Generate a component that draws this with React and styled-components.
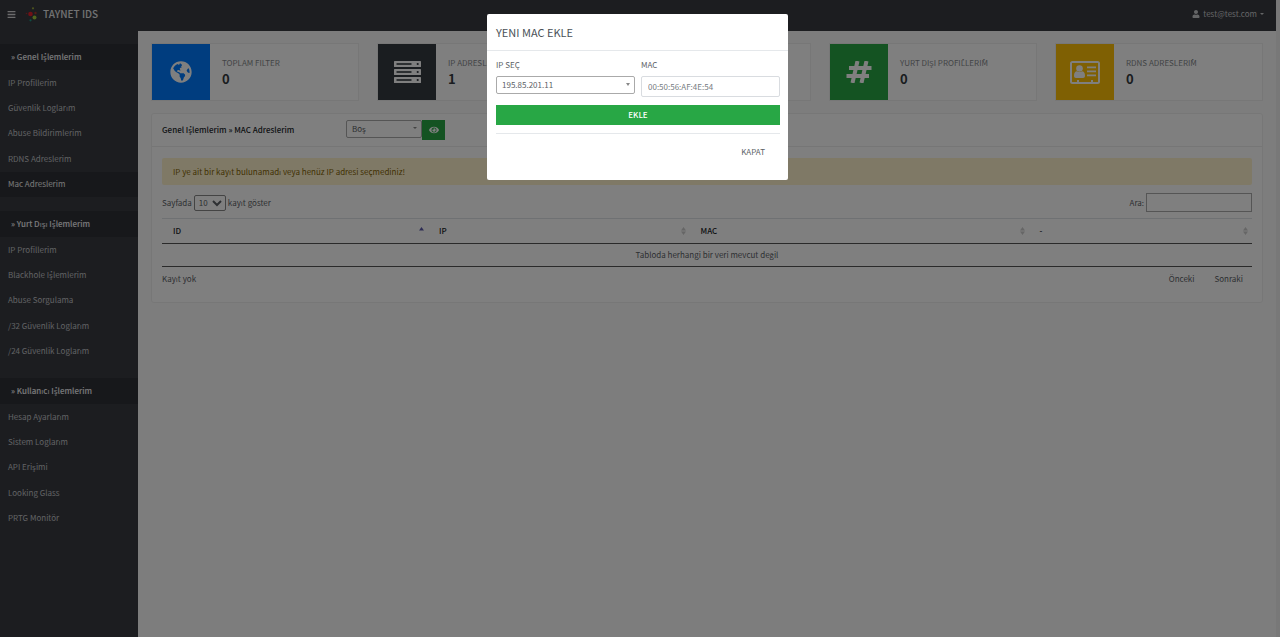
import React, { useState } from "react";
import styled, { createGlobalStyle } from "styled-components";
import { FaBars, FaUser, FaEye, FaGlobeAmericas } from "react-icons/fa";

const GlobalStyle = createGlobalStyle`
  * {
    box-sizing: border-box;
  }

  body {
    margin: 0;
    background-color: #fbfbfb;
    color: #5c6166;
    font-family: "Noto Sans CJK SC", "Open Sans", sans-serif;
    font-size: 8px;
    line-height: 12px;
  }

  button,
  input,
  select {
    font: inherit;
    color: inherit;
  }

  a {
    color: inherit;
    text-decoration: none;
  }
`;

const Page = styled.div`
  min-height: 100vh;
  display: grid;
  grid-template-columns: 138px 1fr;
  grid-template-rows: 31px 1fr;
  border-right: 4px solid #f1f1f1;
`;

const TopBar = styled.header`
  grid-column: 1 / -1;
  display: flex;
  align-items: center;
  justify-content: space-between;
  padding: 0 12px 3px 7px;
  background-color: #383a40;
  color: #c9cacd;
`;

const Brand = styled.div`
  display: flex;
  align-items: center;
  font-size: 10px;
  font-weight: 500;
  color: #e4e4e6;
`;

const MenuButton = styled.button`
  display: flex;
  padding: 0;
  margin-right: 9px;
  border: none;
  background: none;
  color: #d8d8da;
  font-size: 9px;
`;

const Logo = styled.svg`
  width: 14px;
  height: 16px;
  margin-right: 4px;
`;

const UserButton = styled.button`
  display: flex;
  align-items: center;
  gap: 3px;
  padding: 0;
  border: none;
  background: none;
`;

const Caret = styled.span`
  border-left: 2px solid transparent;
  border-right: 2px solid transparent;
  border-top: ${({ size }) => size || 2}px solid currentColor;
`;

const Sidebar = styled.nav`
  padding-top: 13px;
  background-color: #383a40;
`;

const Group = styled.section`
  margin-bottom: 14px;
`;

const GroupTitle = styled.h2`
  margin: 0;
  padding: 0 11px;
  background-color: #2f3136;
  color: #f4f4f6;
  font-size: 8px;
  font-weight: 500;
  line-height: 26px;
`;

const MenuList = styled.ul`
  display: grid;
  grid-auto-rows: 1fr;
  min-height: 127px;
  margin: 0;
  padding: 0;
  list-style: none;
`;

const MenuLink = styled.a`
  display: flex;
  align-items: center;
  height: 100%;
  padding: 0 8px;
  color: ${({ $active }) => ($active ? "#f0f0f1" : "#c2c4c8")};
  background-color: ${({ $active }) => ($active ? "#2f3136" : "transparent")};
`;

const Content = styled.main`
  padding: 12px 13px;
`;

const Cards = styled.div`
  display: grid;
  grid-template-columns: repeat(5, 1fr);
  gap: 18px;
  margin-bottom: 12px;
`;

const Card = styled.div`
  display: flex;
  border: 1px solid #eeeeee;
  background-color: #ffffff;
`;

const CardIcon = styled.div`
  display: flex;
  align-items: center;
  justify-content: center;
  width: 58px;
  background-color: ${({ color }) => color};
  color: #ffffff;
  font-size: 22px;
`;

const CardBody = styled.div`
  padding: 13px 12px 11px;
`;

const CardLabel = styled.div`
  color: #85888c;
`;

const CardValue = styled.div`
  color: #343a40;
  font-size: 13px;
  font-weight: 700;
  line-height: 20px;
`;

const Panel = styled.section`
  border: 1px solid #efefef;
  border-radius: 3px;
  background-color: #ffffff;
`;

const PanelHeader = styled.div`
  display: grid;
  grid-template-columns: 184px 99px;
  align-items: center;
  padding: 6px 10px;
  border-bottom: 1px solid #ececec;
`;

const PanelTitle = styled.h1`
  margin: 0;
  color: #212529;
  font-size: 8px;
  font-weight: 500;
  line-height: 12px;
`;

const FilterForm = styled.form`
  display: flex;
`;

const SelectBox = styled.div`
  position: relative;
  flex: 1;

  select {
    display: block;
    width: 100%;
    height: 18px;
    padding: 0 5px;
    border: 1px solid #aaaaaa;
    border-radius: 2px;
    background-color: #ffffff;
    appearance: none;
  }

  ${Caret} {
    position: absolute;
    right: 5px;
    top: 7px;
    color: #888888;
    pointer-events: none;
  }
`;

const ShowButton = styled.button`
  display: flex;
  align-items: center;
  justify-content: center;
  width: 23px;
  height: 20px;
  border: none;
  background-color: #28a745;
  color: #ffffff;
  font-size: 10px;
`;

const PanelBody = styled.div`
  padding: 11px 10px 17px;
`;

const Alert = styled.div`
  padding: 8px 11px 7px;
  border-radius: 2px;
  background-color: #fff3cd;
  color: #856404;
`;

const TableControls = styled.div`
  display: flex;
  justify-content: space-between;
  align-items: center;
  padding: 8px 0 6px;
`;

const ControlLabel = styled.label`
  display: flex;
  align-items: center;
  gap: 2px;

  select {
    width: 32px;
    height: 16px;
    padding: 0;
    border: 1px solid #888888;
    border-radius: 2px;
    background-color: #ffffff;
  }

  input {
    width: 106px;
    height: 19px;
    border: 1px solid #aaaaaa;
    background-color: #ffffff;
  }
`;

const Table = styled.table`
  width: 100%;
  table-layout: fixed;
  border-collapse: collapse;
  border-top: 1px solid #dee2e6;
  border-bottom: 1px solid #555555;

  th {
    padding: 6px 4px 6px 11px;
    border-bottom: 1px solid #555555;
    color: #212529;
    font-weight: 500;
    text-align: left;
  }

  td {
    height: 23px;
    padding: 0;
    text-align: center;
  }
`;

const HeadCell = styled.div`
  display: flex;
  justify-content: space-between;
  align-items: center;
`;

const SortIcon = styled.svg`
  width: 5px;
  height: 8px;
`;

const TableFooter = styled.div`
  display: flex;
  justify-content: space-between;
  align-items: center;
  padding-top: 6px;
`;

const Pager = styled.div`
  display: flex;
  gap: 2px;

  button {
    padding: 0 9px;
    border: none;
    background: none;
  }
`;

const Overlay = styled.div`
  position: fixed;
  inset: 0;
  display: flex;
  justify-content: center;
  align-items: flex-start;
  padding: 14px 5px 0 0;
  background-color: rgba(0, 0, 0, 0.5);
`;

const Modal = styled.div`
  width: 301px;
  border-radius: 2px;
  background-color: #ffffff;
`;

const ModalTitle = styled.h2`
  margin: 0;
  padding: 9px;
  border-bottom: 1px solid #e5e8eb;
  color: #495057;
  font-size: 11px;
  font-weight: 400;
  line-height: 18px;
`;

const ModalBody = styled.form`
  padding: 8px 8px 22px 9px;
`;

const Fields = styled.div`
  display: grid;
  grid-template-columns: 1fr 1fr;
  gap: 6px;
  margin-bottom: 8px;

  label {
    display: block;
    margin-bottom: 5px;
  }

  input {
    display: block;
    width: 100%;
    height: 21px;
    padding: 0 6px;
    border: 1px solid #d9dce0;
    border-radius: 2px;
  }

  input::placeholder {
    color: #777c81;
    opacity: 1;
  }
`;

const SubmitButton = styled.button`
  display: block;
  width: 100%;
  height: 20px;
  padding: 0;
  border: none;
  background-color: #28a745;
  color: #ffffff;
  font-weight: 500;
`;

const ModalFooter = styled.div`
  display: flex;
  justify-content: flex-end;
  margin-top: 8px;
  padding: 12px 15px 0;
  border-top: 1px solid #e5e8eb;

  button {
    padding: 0;
    border: none;
    background: none;
  }
`;

const ServerIcon = () => (
  <svg width="27" height="22" viewBox="0 0 27 22" fill="currentColor">
    {[0, 8, 16].map((y) => (
      <g key={y}>
        <rect y={y} width="27" height="6" rx="0.6" />
        <rect x="2.5" y={y + 2.2} width="15" height="1.6" fill="#343a40" />
        <circle cx="23.7" cy={y + 3} r="1.1" fill="#343a40" />
      </g>
    ))}
  </svg>
);

const HashIcon = () => (
  <svg width="26" height="22" viewBox="0 0 26 22" fill="none" stroke="currentColor" strokeWidth="4">
    <path d="M11.5 0L6.5 22M20.5 0L15.5 22M3 7H25.5M0.5 15H23" />
  </svg>
);

const AddressCardIcon = () => (
  <svg width="30" height="23" viewBox="0 0 30 23" fill="currentColor">
    <path
      fillRule="evenodd"
      d="M2.5 0h25A2.5 2.5 0 0 1 30 2.5v18a2.5 2.5 0 0 1-2.5 2.5h-25A2.5 2.5 0 0 1 0 20.5v-18A2.5 2.5 0 0 1 2.5 0zM2 2v18.5q0 .5.5.5H7v-2h2v2h12v-2h2v2h4.5q.5 0 .5-.5V2z"
    />
    <circle cx="9.5" cy="7.5" r="3.3" />
    <path d="M4 14.8c0-3 1.2-4.6 3-4.6 1.5 1.2 3.5 1.2 5 0 1.8 0 3 1.6 3 4.6 0 1.4-.8 2.2-1.9 2.2H5.9C4.8 17 4 16.2 4 14.8z" />
    <path d="M17 5.5h9v1.7h-9zM17 9.5h9v1.7h-9zM17 13.5h9v1.7h-9z" />
  </svg>
);

const cards = [
  { label: "TOPLAM FILTER", value: 0, color: "#007bff", icon: <FaGlobeAmericas /> },
  { label: "IP ADRESLERİM", value: 1, color: "#343a40", icon: <ServerIcon /> },
  { color: "#17a2b8" },
  { label: "YURT DIŞI PROFİLLERİM", value: 0, color: "#28a745", icon: <HashIcon /> },
  { label: "RDNS ADRESLERİM", value: 0, color: "#ffc107", icon: <AddressCardIcon /> },
];

const menu = [
  {
    title: "Genel İşlemlerim",
    items: [
      "IP Profillerim",
      "Güvenlik Loglarım",
      "Abuse Bildirimlerim",
      "RDNS Adreslerim",
      "Mac Adreslerim",
    ],
  },
  {
    title: "Yurt Dışı İşlemlerim",
    items: [
      "IP Profillerim",
      "Blackhole İşlemlerim",
      "Abuse Sorgulama",
      "/32 Güvenlik Loglarım",
      "/24 Güvenlik Loglarım",
    ],
  },
  {
    title: "Kullanıcı İşlemlerim",
    items: ["Hesap Ayarlarım", "Sistem Loglarım", "API Erişimi", "Looking Glass", "PRTG Monitör"],
  },
];

const columns = [
  { name: "ID", share: "24.4%", sorted: true },
  { name: "IP", share: "24%" },
  { name: "MAC", share: "31.1%" },
  { name: "-", share: "20.5%" },
];

const Col = styled.col`
  width: ${({ $share }) => $share};
`;

const App = () => {
  const [open, setOpen] = useState(true);

  return (
    <>
      <GlobalStyle />
      <Page>
        <TopBar>
          <Brand>
            <MenuButton aria-label="Menü">
              <FaBars />
            </MenuButton>
            <Logo viewBox="0 0 14 16">
              <circle cx="5.5" cy="8" r="2.3" fill="#e0202c" />
              <circle cx="9.5" cy="11.5" r="2" fill="#a2c83a" />
              <circle cx="10.5" cy="7" r="1.2" fill="#a8342c" />
              <circle cx="8" cy="2.3" r="1.1" fill="#9aa83a" />
              <circle cx="1.5" cy="7.5" r="0.8" fill="#a03030" />
              <circle cx="5.5" cy="14.3" r="1.1" fill="#1c9a86" />
            </Logo>
            TAYNET IDS
          </Brand>
          <UserButton>
            <FaUser />
            test@test.com
            <Caret />
          </UserButton>
        </TopBar>
        <Sidebar>
          {menu.map((group) => (
            <Group key={group.title}>
              <GroupTitle>» {group.title}</GroupTitle>
              <MenuList>
                {group.items.map((item) => (
                  <li key={item}>
                    <MenuLink href="#" $active={item === "Mac Adreslerim"}>
                      {item}
                    </MenuLink>
                  </li>
                ))}
              </MenuList>
            </Group>
          ))}
        </Sidebar>
        <Content>
          <Cards>
            {cards.map((card) => (
              <Card key={card.color}>
                <CardIcon color={card.color}>{card.icon}</CardIcon>
                {card.label && (
                  <CardBody>
                    <CardLabel>{card.label}</CardLabel>
                    <CardValue>{card.value}</CardValue>
                  </CardBody>
                )}
              </Card>
            ))}
          </Cards>
          <Panel>
            <PanelHeader>
              <PanelTitle>Genel İşlemlerim » MAC Adreslerim</PanelTitle>
              <FilterForm onSubmit={(e) => e.preventDefault()}>
                <SelectBox>
                  <select aria-label="IP">
                    <option>Boş</option>
                  </select>
                  <Caret />
                </SelectBox>
                <ShowButton aria-label="Göster">
                  <FaEye />
                </ShowButton>
              </FilterForm>
            </PanelHeader>
            <PanelBody>
              <Alert>IP ye ait bir kayıt bulunamadı veya henüz IP adresi seçmediniz!</Alert>
              <TableControls>
                <ControlLabel>
                  Sayfada
                  <select>
                    <option>10</option>
                    <option>25</option>
                    <option>50</option>
                  </select>
                  kayıt göster
                </ControlLabel>
                <ControlLabel>
                  Ara:
                  <input type="search" />
                </ControlLabel>
              </TableControls>
              <Table>
                <colgroup>
                  {columns.map((col) => (
                    <Col key={col.name} $share={col.share} />
                  ))}
                </colgroup>
                <thead>
                  <tr>
                    {columns.map((col) => (
                      <th key={col.name}>
                        <HeadCell>
                          {col.name}
                          <SortIcon viewBox="0 0 5 8">
                            <path d="M0 3.5L2.5 0L5 3.5z" fill={col.sorted ? "#5a58a8" : "#cccccc"} />
                            {!col.sorted && <path d="M0 4.5L2.5 8L5 4.5z" fill="#cccccc" />}
                          </SortIcon>
                        </HeadCell>
                      </th>
                    ))}
                  </tr>
                </thead>
                <tbody>
                  <tr>
                    <td colSpan={4}>Tabloda herhangi bir veri mevcut değil</td>
                  </tr>
                </tbody>
              </Table>
              <TableFooter>
                Kayıt yok
                <Pager>
                  <button>Önceki</button>
                  <button>Sonraki</button>
                </Pager>
              </TableFooter>
            </PanelBody>
          </Panel>
        </Content>
      </Page>
      {open && (
        <Overlay>
          <Modal role="dialog" aria-labelledby="modal-title">
            <ModalTitle id="modal-title">YENI MAC EKLE</ModalTitle>
            <ModalBody onSubmit={(e) => e.preventDefault()}>
              <Fields>
                <div>
                  <label htmlFor="ip">IP SEÇ</label>
                  <SelectBox>
                    <select id="ip">
                      <option>195.85.201.11</option>
                    </select>
                    <Caret size={3} />
                  </SelectBox>
                </div>
                <div>
                  <label htmlFor="mac">MAC</label>
                  <input id="mac" placeholder="00:50:56:AF:4E:54" />
                </div>
              </Fields>
              <SubmitButton>EKLE</SubmitButton>
              <ModalFooter>
                <button type="button" onClick={() => setOpen(false)}>
                  KAPAT
                </button>
              </ModalFooter>
            </ModalBody>
          </Modal>
        </Overlay>
      )}
    </>
  );
};

export default App;
